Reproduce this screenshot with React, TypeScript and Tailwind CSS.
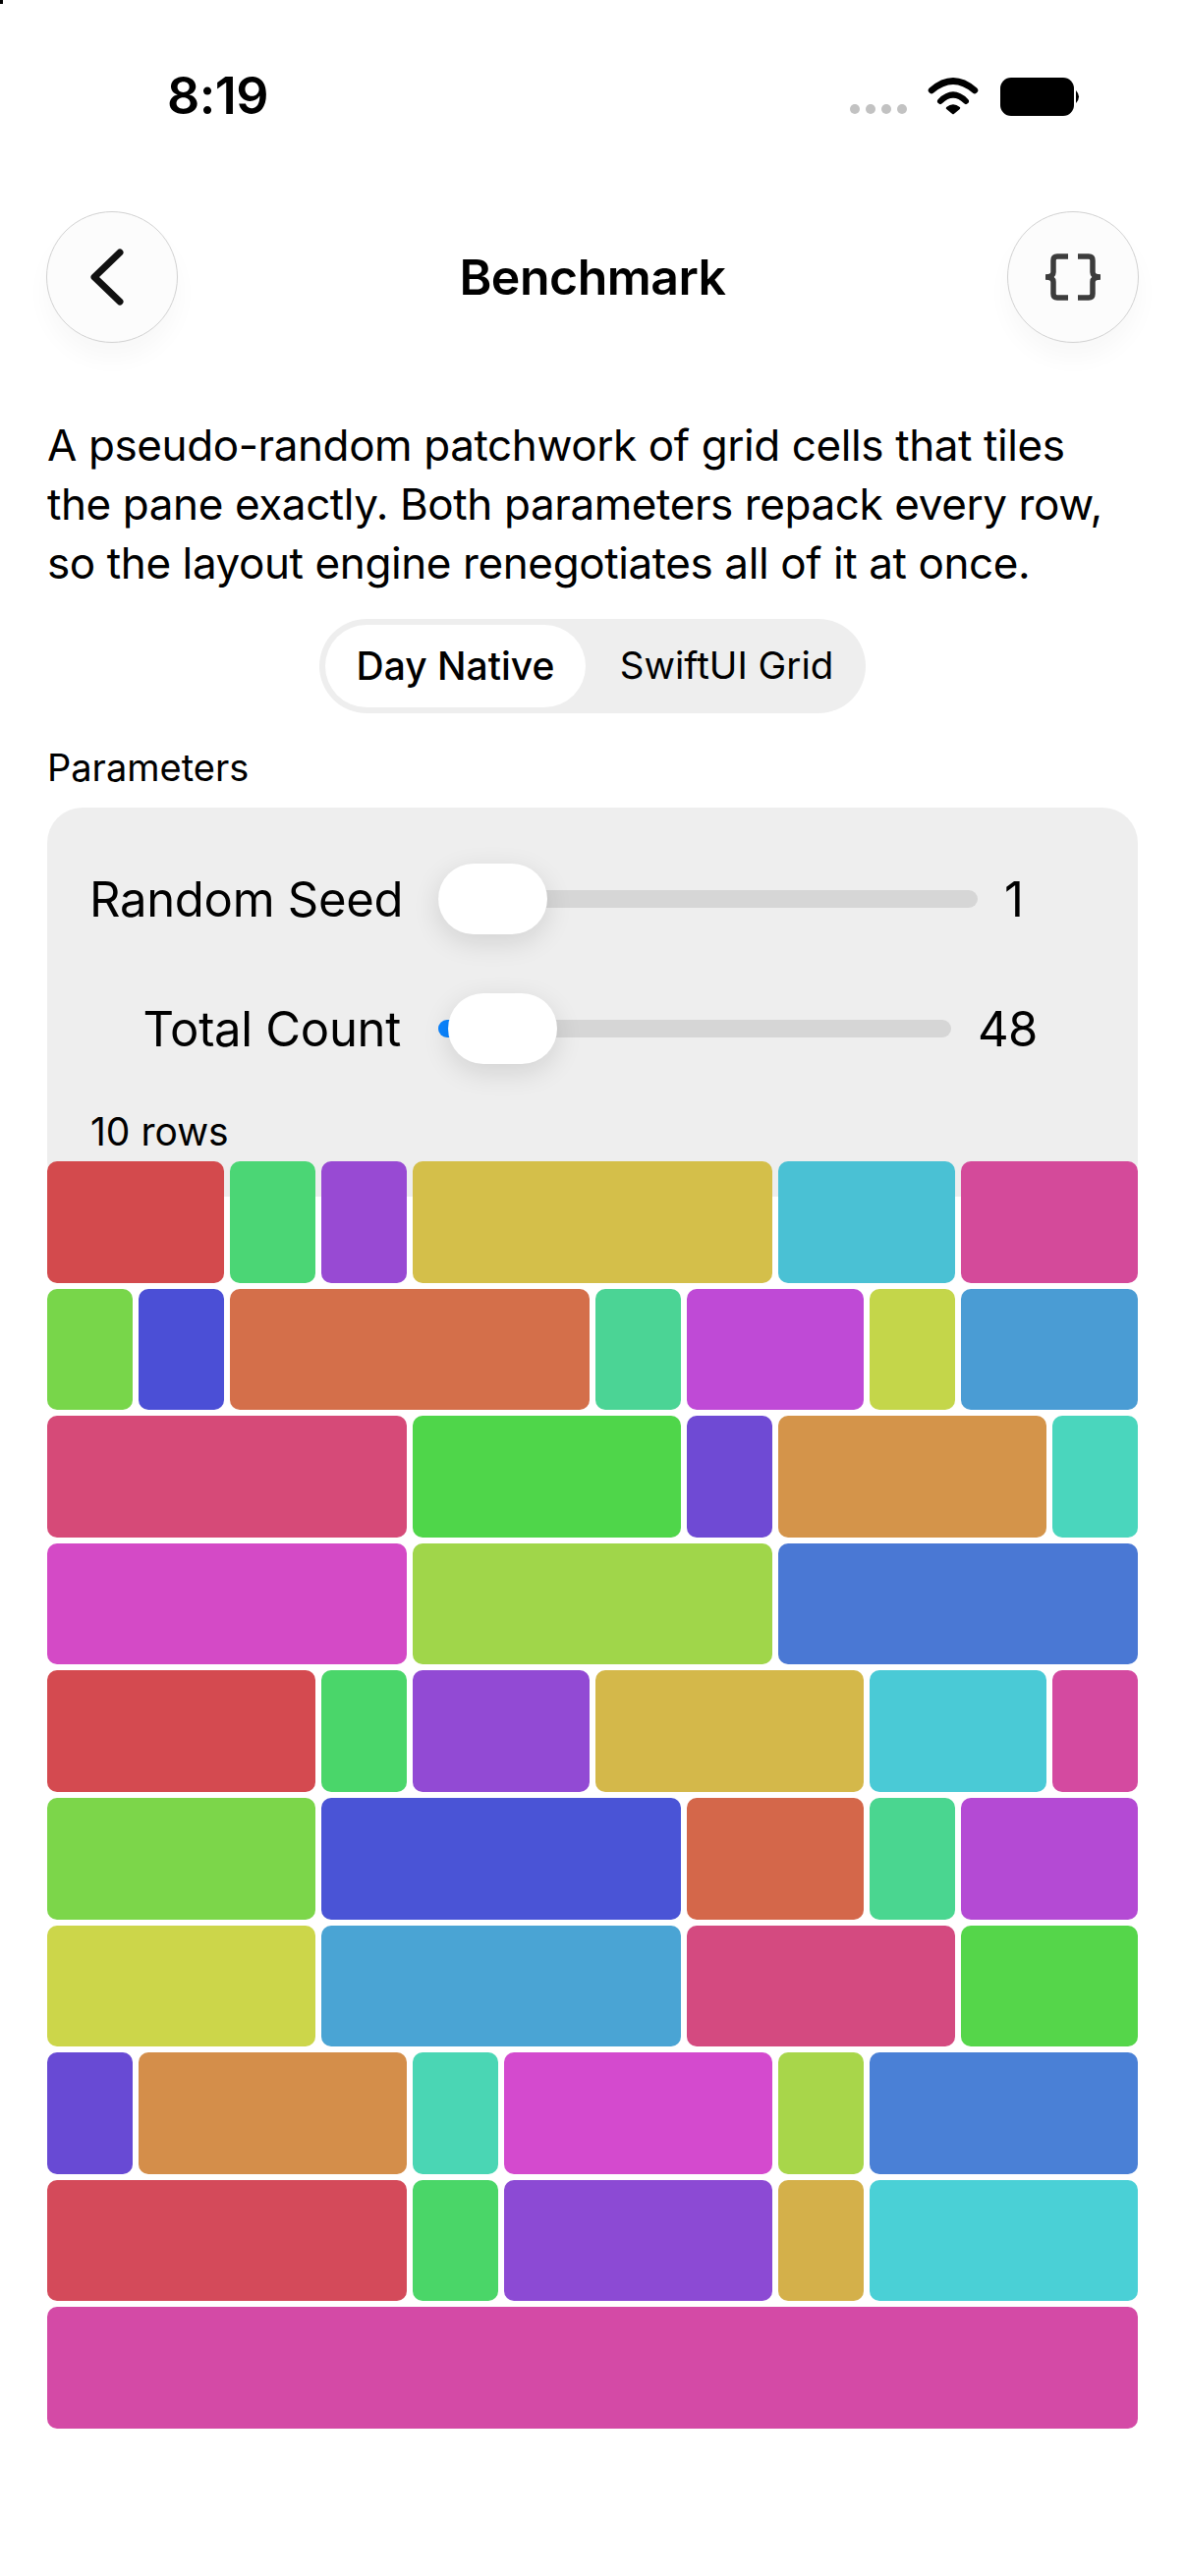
import type { ReactNode } from 'react';

type Cell = { span: number; color: string };

const rows: Cell[][] = [
  [
    { span: 2, color: '#d34a4d' },
    { span: 1, color: '#4bd675' },
    { span: 1, color: '#984ad3' },
    { span: 4, color: '#d4bf4a' },
    { span: 2, color: '#4ac1d4' },
    { span: 2, color: '#d44a9a' },
  ],
  [
    { span: 1, color: '#78d64a' },
    { span: 1, color: '#4b4fd6' },
    { span: 4, color: '#d46f4a' },
    { span: 1, color: '#4bd495' },
    { span: 2, color: '#bf4ad6' },
    { span: 1, color: '#c4d64a' },
    { span: 2, color: '#4a9cd4' },
  ],
  [
    { span: 4, color: '#d64a78' },
    { span: 3, color: '#4fd64a' },
    { span: 1, color: '#6f4ad4' },
    { span: 3, color: '#d4944a' },
    { span: 1, color: '#4ad6bd' },
  ],
  [
    { span: 4, color: '#d44ac6' },
    { span: 4, color: '#a0d64a' },
    { span: 4, color: '#4a78d4' },
  ],
  [
    { span: 3, color: '#d44a50' },
    { span: 1, color: '#4ad66a' },
    { span: 2, color: '#924ad4' },
    { span: 3, color: '#d4b84a' },
    { span: 2, color: '#4acad6' },
    { span: 1, color: '#d44aa0' },
  ],
  [
    { span: 3, color: '#7cd64a' },
    { span: 4, color: '#4a54d6' },
    { span: 2, color: '#d4674a' },
    { span: 1, color: '#4ad690' },
    { span: 2, color: '#b44ad4' },
  ],
  [
    { span: 3, color: '#ccd64a' },
    { span: 4, color: '#4aa4d4' },
    { span: 3, color: '#d44a80' },
    { span: 2, color: '#55d64a' },
  ],
  [
    { span: 1, color: '#684ad4' },
    { span: 3, color: '#d48e4a' },
    { span: 1, color: '#4ad6b4' },
    { span: 3, color: '#d44ace' },
    { span: 1, color: '#a8d64a' },
    { span: 3, color: '#4a80d6' },
  ],
  [
    { span: 4, color: '#d44a5a' },
    { span: 1, color: '#4ad668' },
    { span: 3, color: '#8c4ad4' },
    { span: 1, color: '#d4b04a' },
    { span: 3, color: '#4ad0d6' },
  ],
  [{ span: 12, color: '#d44aa6' }],
];

const spanClass: Record<number, string> = {
  1: 'col-span-1',
  2: 'col-span-2',
  3: 'col-span-3',
  4: 'col-span-4',
  12: 'col-span-12',
};

function StatusBar() {
  return (
    <div className="h-[196px] pt-[73px] pl-[170px] pr-[106px] flex items-start justify-between">
      <span className="text-[52px] leading-[50px] font-semibold text-black tracking-[-0.5px]">8:19</span>
      <svg width="240" height="42" viewBox="0 0 240 42" className="mt-[6px]">
        <circle cx="10" cy="32" r="5" fill="#c2c2c2" />
        <circle cx="26" cy="32" r="5" fill="#c2c2c2" />
        <circle cx="42" cy="32" r="5" fill="#c2c2c2" />
        <circle cx="58" cy="32" r="5" fill="#c2c2c2" />
        <path d="M88 13 Q110 -6 132 13" fill="none" stroke="#000" strokeWidth="6.5" strokeLinecap="round" />
        <path d="M97 24 Q110 11 123 24" fill="none" stroke="#000" strokeWidth="6" strokeLinecap="round" />
        <path d="M104 31 Q110 26 116 31 L110 36 Z" fill="#000" stroke="#000" strokeWidth="2.500" strokeLinejoin="round" />
        <rect x="158" y="0" width="75" height="39" rx="11" fill="#000" />
        <path d="M235 13 Q241 19.500 235 26 Z" fill="#000" />
      </svg>
    </div>
  );
}

function RoundButton({ children }: { children: ReactNode }) {
  return (
    <button className="w-[134px] h-[134px] rounded-full border border-[#d2d2d2] bg-[#fcfcfc] shadow-[0_16px_24px_rgba(0,0,0,0.03)] flex items-center justify-center">
      {children}
    </button>
  );
}

function SliderRow({
  label,
  value,
  trackWidth,
  knobLeft,
  showFill,
}: {
  label: string;
  value: string;
  trackWidth: string;
  knobLeft: string;
  showFill?: boolean;
}) {
  return (
    <div className="h-[72px] pl-[43px] flex items-center">
      <span className="w-[317px] shrink-0 whitespace-nowrap text-right text-[49px] leading-none text-black tracking-[-0.3px]">
        {label}
      </span>
      <div className={`relative ml-[38px] h-[18px] rounded-full bg-[#d6d6d6] ${trackWidth}`}>
        {showFill && <div className="absolute left-0 top-0 h-[18px] w-[30px] rounded-l-full bg-[#0a84ff]" />}
        <div
          className={`absolute top-[-27px] w-[111px] h-[72px] rounded-[36px] bg-white shadow-[0_8px_28px_rgba(0,0,0,0.12)] ${knobLeft}`}
        />
      </div>
      <span className="ml-[27px] text-[49px] leading-none text-black tracking-[-0.6px]">{value}</span>
    </div>
  );
}

export default function App() {
  return (
    <div className="relative w-[1206px] h-[2622px] bg-white overflow-hidden font-['Inter','Liberation_Sans',sans-serif]">
      {/* stray mark in the corner of the capture */}
      <div className="absolute left-0 top-0 w-[3px] h-[4px] bg-black" />

      <StatusBar />

      {/* Header */}
      <div className="h-[134px] mx-[47px] mt-[19px] flex items-center justify-between">
        <RoundButton>
          <svg width="36" height="58" viewBox="0 0 36 58" fill="none" className="mr-[10px]">
            <path d="M31 4 L5 29 L31 54" stroke="#111" strokeWidth="7" strokeLinecap="round" strokeLinejoin="round" />
          </svg>
        </RoundButton>
        <h1 className="text-[50px] leading-none font-semibold text-black tracking-[-0.5px]">Benchmark</h1>
        <RoundButton>
          <svg width="60" height="48" viewBox="0 0 60 48" fill="none" stroke="#3c3c3c" strokeWidth="5.5">
            <path d="M25 3 H14 Q10 3 10 7 V19 Q10 24 2 24 Q10 24 10 29 V41 Q10 45 14 45 H25" />
            <path d="M35 3 H46 Q50 3 50 7 V19 Q50 24 58 24 Q50 24 50 29 V41 Q50 45 46 45 H35" />
          </svg>
        </RoundButton>
      </div>

      {/* Description */}
      <p className="mx-[48px] mt-[74px] text-[44px] leading-[60px] text-black tracking-[-0.4px] whitespace-nowrap">
        A pseudo-random patchwork of grid cells that tiles
        <br />
        the pane exactly. Both parameters repack every row,
        <br />
        so the layout engine renegotiates all of it at once.
      </p>

      {/* Segmented control */}
      <div className="mt-[27px] flex justify-center">
        <div className="w-[556px] h-[96px] rounded-[48px] bg-[#eeeeee] p-[6px] flex items-center">
          <div className="w-[265px] h-[84px] rounded-[42px] bg-white flex items-center justify-center text-[39px] font-medium text-black">
            Day Native
          </div>
          <div className="flex-1 pl-[8px] flex items-center justify-center text-[38.5px] text-black">SwiftUI Grid</div>
        </div>
      </div>

      <p className="mx-[48px] mt-[33px] text-[38px] leading-[44px] text-black">Parameters</p>

      {/* Parameters panel, the cell grid overlaps its bottom edge */}
      <div className="mx-[48px] mt-[19px] h-[396px] rounded-[36px] bg-[#eeeeee] pt-[57px]">
        <div className="flex flex-col gap-[60px]">
          <SliderRow label="Random Seed" value="1" trackWidth="w-[549px]" knobLeft="left-0" />
          <SliderRow label="Total Count" value="48" trackWidth="w-[522px]" knobLeft="left-[10px]" showFill />
        </div>
        <p className="mt-[47px] pl-[44px] text-[39px] leading-[44px] text-black">10 rows</p>
      </div>

      {/* Patchwork */}
      <div className="relative mx-[48px] -mt-[36px] h-[1290px] flex flex-col gap-[6px]">
        {rows.map((row, i) => (
          <div key={i} className="flex-1 grid grid-cols-12 gap-[6px]">
            {row.map((cell, j) => (
              <div
                key={j}
                className={`rounded-[10px] ${spanClass[cell.span]}`}
                style={{ backgroundColor: cell.color }}
              />
            ))}
          </div>
        ))}
      </div>
    </div>
  );
}
